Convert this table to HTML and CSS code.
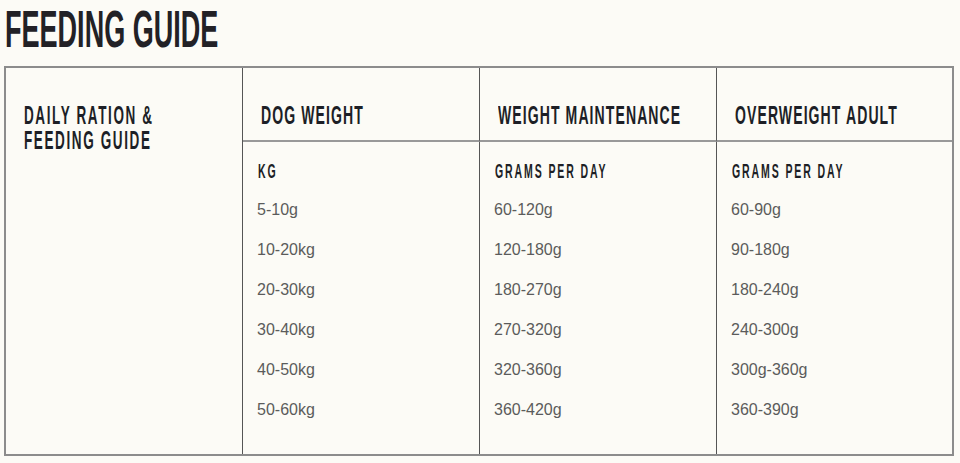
FILE: index.html
```html
<!DOCTYPE html>
<html lang="en">
<head>
<meta charset="utf-8">
<title>Feeding Guide</title>
<link rel="stylesheet" href="styles.css">
</head>
<body>
<div class="page">
  <h1 class="title"><span class="cond">FEEDING GUIDE</span></h1>
  <div class="guide">
    <div class="lead"><span class="cond lead-text">DAILY RATION &amp;<br>FEEDING GUIDE</span></div>

    <div class="head"><span class="cond">DOG WEIGHT</span></div>
    <div class="head"><span class="cond">WEIGHT MAINTENANCE</span></div>
    <div class="head last"><span class="cond">OVERWEIGHT ADULT</span></div>

    <div class="body">
      <div class="sub"><span class="cond">KG</span></div>
      <ul class="rows">
        <li>5-10g</li>
        <li>10-20kg</li>
        <li>20-30kg</li>
        <li>30-40kg</li>
        <li>40-50kg</li>
        <li>50-60kg</li>
      </ul>
    </div>
    <div class="body">
      <div class="sub"><span class="cond">GRAMS PER DAY</span></div>
      <ul class="rows">
        <li>60-120g</li>
        <li>120-180g</li>
        <li>180-270g</li>
        <li>270-320g</li>
        <li>320-360g</li>
        <li>360-420g</li>
      </ul>
    </div>
    <div class="body last">
      <div class="sub"><span class="cond">GRAMS PER DAY</span></div>
      <ul class="rows">
        <li>60-90g</li>
        <li>90-180g</li>
        <li>180-240g</li>
        <li>240-300g</li>
        <li>300g-360g</li>
        <li>360-390g</li>
      </ul>
    </div>
  </div>
</div>
</body>
</html>
```

FILE: styles.css
```css
html, body {
  margin: 0;
  padding: 0;
  background: #fcfbf6;
}

.page {
  width: 960px;
  height: 463px;
  overflow: hidden;
  font-family: "Liberation Sans", Arial, sans-serif;
}

.cond {
  display: inline-block;
  white-space: nowrap;
  font-weight: 700;
  transform-origin: 0 50%;
  transform: scaleX(0.54);
}

.title {
  margin: 0 0 11px 0;
  padding: 3px 0 0 5px;
  font-size: 52px;
  line-height: 52px;
  color: #222126;
  font-weight: 700;
}

.title .cond {
  transform: scaleX(0.52);
}

.guide {
  margin-left: 4px;
  width: 950px;
  height: 390px;
  box-sizing: border-box;
  border: 2px solid #8c8c8c;
  display: grid;
  grid-template-columns: 237px 237px 237px minmax(0, 1fr);
  grid-template-rows: 74px minmax(0, 1fr);
  color: #1d1f26;
}

.lead {
  grid-row: 1 / span 2;
  border-right: 1px solid #555;
  padding: 35px 0 0 18px;
  font-size: 25px;
  line-height: 25px;
}

.lead-text {
  letter-spacing: 3px;
}

.head {
  box-sizing: border-box;
  border-right: 1px solid #555;
  border-bottom: 2px solid #999;
  padding: 34px 0 0 18px;
  font-size: 26px;
  line-height: 26px;
  letter-spacing: 2px;
}

.body {
  border-right: 1px solid #555;
  padding: 18.5px 0 0 0;
}

.last {
  border-right: 0;
}

.sub {
  padding-left: 15px;
  font-size: 19.5px;
  line-height: 20px;
  letter-spacing: 3.5px;
}

.rows {
  list-style: none;
  margin: 9.5px 0 0 0;
  padding: 0 0 0 14px;
  font-size: 16px;
  line-height: 40px;
  color: #5b5b5b;
}
```
